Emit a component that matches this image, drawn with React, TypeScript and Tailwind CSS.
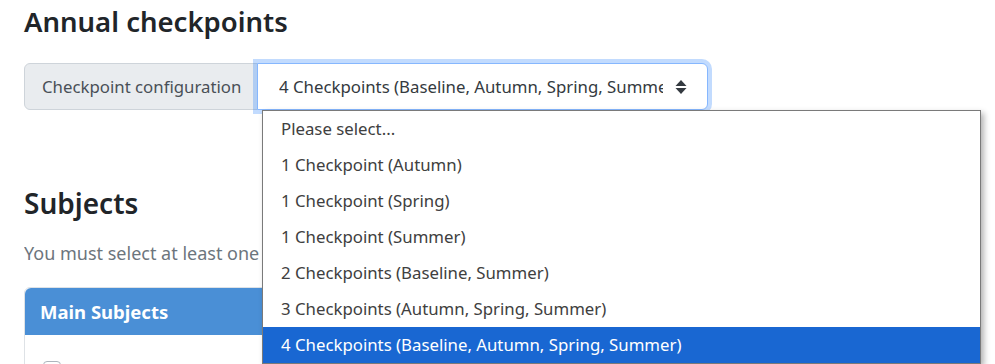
const options = [
  "Please select...",
  "1 Checkpoint (Autumn)",
  "1 Checkpoint (Spring)",
  "1 Checkpoint (Summer)",
  "2 Checkpoints (Baseline, Summer)",
  "3 Checkpoints (Autumn, Spring, Summer)",
  "4 Checkpoints (Baseline, Autumn, Spring, Summer)",
];

function SortArrows() {
  return (
    <svg width="12" height="16" viewBox="0 0 12 16" className="shrink-0">
      <path d="M6 1 L11.5 7 H0.5 Z" fill="#343a40" />
      <path d="M6 15 L11.5 9 H0.5 Z" fill="#343a40" />
    </svg>
  );
}

export default function App() {
  const selected = options.length - 1;

  return (
    <div
      className="relative h-[364px] overflow-hidden bg-white px-6 text-[#212529]"
      style={{ fontFamily: '"Noto Sans", "Open Sans", sans-serif' }}
    >
      <h1 className="pt-[5px] text-[27.5px] font-semibold leading-[34px]">Annual checkpoints</h1>

      <div className="mt-6 flex h-[47px] w-[684px]">
        <div className="flex w-[234px] shrink-0 items-center whitespace-nowrap rounded-l-md border border-[#ced4da] bg-[#e9ecef] px-[17px] text-[16.8px] text-[#495057]">
          Checkpoint configuration
        </div>
        <div className="relative -ml-px flex min-w-0 flex-1 items-center gap-3 rounded-r-md border border-[#86b7fe] bg-white pl-[21px] pr-5 shadow-[0_0_0_4px_rgba(13,110,253,0.25)]">
          <span className="min-w-0 flex-1 overflow-hidden whitespace-nowrap text-[16.8px] text-[#343a40]">
            {options[selected]}
          </span>
          <SortArrows />
        </div>
      </div>

      <h2 className="mt-[76px] text-[28px] font-semibold leading-[34px]">Subjects</h2>
      <p className="mt-[21px] w-[238px] overflow-hidden whitespace-nowrap text-[18px] leading-6 text-[#6c757d]">
        You must select at least one
      </p>

      <div className="mt-[22px] w-[700px] rounded-t-md border border-[#dee2e6]">
        <div className="flex h-[47px] items-center rounded-t-md bg-[#4a8fd6] px-[15px] text-[18.5px] font-bold text-white">
          Main Subjects
        </div>
        <div className="px-[18px] pt-[26px]">
          <div className="h-[18px] w-[18px] rounded border border-[#adb5bd] bg-white" />
        </div>
      </div>

      <ul className="absolute left-[262px] top-[110px] w-[719px] border border-[#7a7a7a] bg-white shadow-[3px_3px_6px_rgba(0,0,0,0.3)]">
        {options.map((o, i) => (
          <li
            key={o}
            className={`flex h-9 items-center whitespace-nowrap px-[18px] text-[16.8px] ${
              i === selected ? "bg-[#1967d2] text-white" : "text-[#404040]"
            }`}
          >
            {o}
          </li>
        ))}
      </ul>
    </div>
  );
}
